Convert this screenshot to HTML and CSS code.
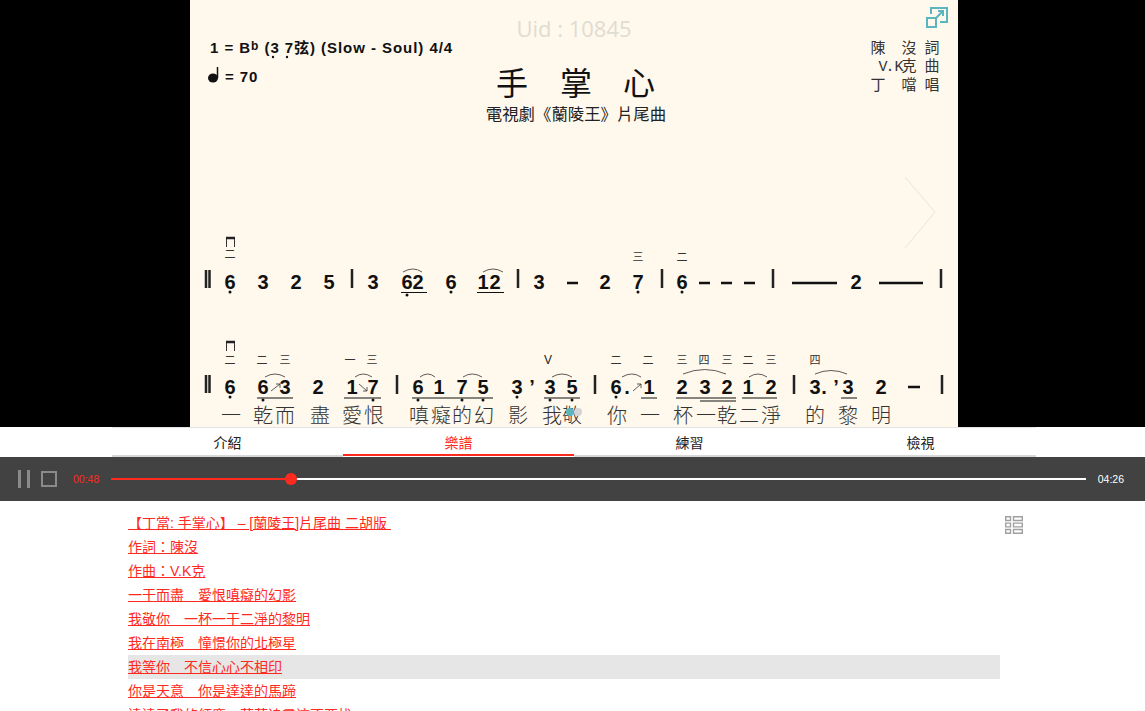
FILE: index.html
```html
<!DOCTYPE html>
<html lang="zh-Hant">
<head>
<meta charset="utf-8">
<title>手掌心</title>
<link rel="stylesheet" href="styles.css">
</head>
<body>
<section class="stage">
  <svg class="sheet" viewBox="190 0 768 427" width="768" height="427">
    <rect class="paper" x="190" y="0" width="768" height="427"/>
    <text class="uid" x="574" y="37">Uid : 10845</text>
    <g class="expand">
      <path d="M931 14V8H947V22H940"/>
      <path d="M927 18H936V27H927Z"/>
      <path d="M936 18L943 11M938 11H943V16"/>
    </g>
    <text class="key" x="210" y="53">1 = B<tspan class="sup" dy="-3">b</tspan><tspan dy="3"> (</tspan><tspan class="keyn">3 7</tspan>弦) (Slow - Soul) 4/4</text>
    <g class="ink">
      <circle cx="273" cy="57" r="1.200"/><circle cx="287" cy="57" r="1.200"/>
    </g>
    <ellipse class="ink" cx="213" cy="78" rx="5" ry="4.5"/>
    <path class="stem" d="M217.500 78V67"/>
    <text class="key" x="225" y="82">= 70</text>
    <text class="title" x="512 576 639" y="95">手掌心</text>
    <text class="subtitle" x="576" y="120">電視劇《蘭陵王》片尾曲</text>
    <text class="credit" x="878 909 932" y="53">陳沒詞</text>
    <text class="credit" x="883 890 899 909 932" y="71">V.K克曲</text>
    <text class="credit" x="878 909 932" y="90">丁噹唱</text>
    <path class="chevron" d="M905 177L935 212L905 248"/>

    <g class="bars">
      <path d="M206 270V288M209.500 270V288M352 269V288M518 269V288M662 269V288M773 269V288M941 269V288"/>
      <path d="M206 375V393M209.500 375V393M397 375V394M595 375V394M794 375V394M942 375V394"/>
    </g>
    <path class="bow" d="M226.500 247V238H234.500V247"/>
    <path class="bowtop" d="M226 238H235"/>
    <path class="bow" d="M226.500 351V342H234.500V351"/>
    <path class="bowtop" d="M226 342H235"/>

    <text class="finger" x="230" y="258">二</text>
    <text class="finger" x="638 682" y="261">三二</text>
    <text class="finger" x="230 262 285 350 372 616 648 682 704 727 748 771 815" y="364">二二三一三二二三四三二三四</text>
    <text class="bowmark" x="548" y="364">V</text>

    <text class="note" x="230 263 296 329 373 407 418 451 483 495 539 605 638 682" y="289">63253626123276</text>
    <text class="note" x="230 263 285 318 352 373 418 439 462 483 517 550 572 616 649 682 705 727 748 771 815 848 881" y="394">66321761753356123212332</text>
    <text class="note" x="627 824" y="394">..</text>
    <text class="note" x="532 836" y="394">’’</text>
    <text class="note" x="856" y="289">2</text>
    <g class="dash">
      <path d="M567 283H578M699 283H710M721 283H732M744 283H755M792 283H837M879 283H923M908 387H920"/>
    </g>
    <g class="under">
      <path d="M401 292.500H427M477 292.500H504"/>
      <path d="M257 398H293M344 398H381M412 398H493M544 398H580M641 398H657M676 398H736M742 398H777M841 398H857"/>
      <path d="M700 401H736"/>
    </g>
    <g class="ink">
      <circle cx="230" cy="292" r="1.500"/><circle cx="407" cy="295" r="1.500"/><circle cx="451" cy="292" r="1.500"/>
      <circle cx="638" cy="292" r="1.500"/><circle cx="682" cy="292" r="1.500"/>
      <circle cx="230" cy="397" r="1.500"/><circle cx="263" cy="400" r="1.500"/><circle cx="373" cy="400" r="1.500"/>
      <circle cx="418" cy="400" r="1.500"/><circle cx="462" cy="400" r="1.500"/><circle cx="483" cy="400" r="1.500"/>
      <circle cx="517" cy="397" r="1.500"/><circle cx="550" cy="400" r="1.500"/><circle cx="572" cy="400" r="1.500"/>
      <circle cx="616" cy="397" r="1.500"/>
    </g>
    <g class="tie">
      <path d="M403 272Q413 266 422 272M483 272Q493 266 503 272"/>
      <path d="M265 377Q275 371 285 377M355 377Q363 371 372 377M420 377Q428 371 435 377M463 377Q472 371 482 377M552 377Q562 371 572 377M622 377Q632 371 641 377M683 374Q705 365 726 374M749 377Q758 371 767 377M815 374Q831 367 847 374"/>
      <path d="M271 391L280 384M276 384H280V388M359 384L367 391M363 391H367V387M633 391L641 384M637 384H641V388"/>
    </g>

    <text class="lyric" x="231 263 285 320 352 374 419 441 462 484 518 552 572 617 650 683 706 727 749 771 815 848 881" y="423">一乾而盡愛恨嗔癡的幻影我敬你一杯一乾二淨的黎明</text>
    <circle class="dot-off" cx="578" cy="412" r="4"/>
    <circle class="dot-on" cx="570" cy="412" r="4"/>
  </svg>
</section>

<nav class="tabs">
  <div class="tab">介紹</div>
  <div class="tab active">樂譜</div>
  <div class="tab">練習</div>
  <div class="tab">檢視</div>
</nav>

<section class="player">
  <div class="pause"><span></span><span></span></div>
  <div class="stop"></div>
  <span class="time elapsed">00:48</span>
  <div class="track">
    <div class="played" style="width:18.46%"><span class="knob"></span></div>
  </div>
  <span class="time total">04:26</span>
</section>

<main class="content">
  <svg class="view-icon" viewBox="0 0 18 18" width="18" height="18">
    <path d="M.7 .7H5.500V4.500H.7ZM8.500 .7H17.300V4.500H8.500ZM.7 7.100H5.500V10.900H.7ZM8.500 7.100H17.300V10.900H8.500ZM.7 13.500H5.500V17.300H.7ZM8.500 13.500H17.300V17.300H8.500Z"/>
  </svg>
  <ul class="list">
    <li><a href="#">【丁當: 手掌心】 – [蘭陵王]片尾曲 二胡版&nbsp;</a></li>
    <li><a href="#">作詞：陳沒</a></li>
    <li><a href="#">作曲：V.K克</a></li>
    <li><a href="#">一干而盡　愛恨嗔癡的幻影</a></li>
    <li><a href="#">我敬你　一杯一干二淨的黎明</a></li>
    <li><a href="#">我在南極　憧憬你的北極星</a></li>
    <li class="current"><a href="#">我等你　不信心心不相印</a></li>
    <li><a href="#">你是天意　你是達達的馬蹄</a></li>
    <li><a href="#">達達了我的紅塵　茫茫追尋這不要找</a></li>
  </ul>
</main>
</body>
</html>
```
FILE: styles.css
```css
* { box-sizing: border-box; }
html, body { margin: 0; padding: 0; height: 711px; overflow: hidden; background: #fff; }
body { font-family: "Liberation Sans", "Noto Sans CJK TC", sans-serif; color: #222; }

.stage { height: 427px; background: #000; padding-left: 190px; }
.sheet { display: block; width: 768px; height: 427px; }
.paper { fill: #fff8ec; }
.sheet text { text-anchor: middle; }
.uid { font-family: "Open Sans", sans-serif; font-size: 22px; fill: #dfdcd2; }
.expand path { fill: none; stroke: #5ab5bf; stroke-width: 2; }
.sheet .key { text-anchor: start; font-family: "Liberation Sans", "Noto Sans CJK TC", sans-serif; font-weight: 700; font-size: 15px; letter-spacing: .95px; fill: #111; }
.sup { font-size: 12px; }
.title { font-family: "Noto Sans CJK TC", sans-serif; font-size: 32px; fill: #111; font-weight: 400; }
.subtitle { font-family: "Noto Sans CJK TC", sans-serif; font-size: 16.4px; fill: #222; }
.credit { font-family: "Liberation Mono", "Noto Sans CJK TC", monospace; font-size: 15px; fill: #333; }
.chevron { fill: none; stroke: #eae5da; stroke-width: 1; }
.ink { fill: #111; }
.stem { stroke: #111; stroke-width: 1.5; fill: none; }
.bars path { stroke: #222; stroke-width: 2.5; fill: none; }
.bow { stroke: #333; stroke-width: 1; fill: none; }
.bowtop { stroke: #222; stroke-width: 2.5; fill: none; }
.finger { font-family: "Noto Sans CJK TC", sans-serif; font-size: 11px; fill: #333; }
.bowmark { font-family: "Liberation Sans", sans-serif; font-size: 12px; fill: #222; }
.note { font-family: "Liberation Sans", sans-serif; font-weight: 700; font-size: 20px; fill: #111; }
.dash path { stroke: #111; stroke-width: 2.5; fill: none; }
.under path { stroke: #111; stroke-width: 1.2; fill: none; }
.tie path { stroke: #333; stroke-width: .8; fill: none; }
.lyric { font-family: "Noto Sans CJK TC", sans-serif; font-size: 20px; font-weight: 300; fill: #333; }
.dot-off { fill: #d4d4d4; }
.dot-on { fill: #5ab5bf; }

.tabs { width: 924px; height: 30px; margin-left: 112px; display: grid; grid-template-columns: repeat(4, 1fr); align-items: start; border-top: 1px solid #e3e3e3; }
.tab { font-size: 14px; line-height: 31px; height: 29px; text-align: center; color: #222; border-bottom: 2px solid #d8d8d8; }
.tab.active { height: 28px; color: #ff2a1f; border-bottom-color: #ff2a1f; }

.player { height: 44px; background: #424242; display: flex; align-items: center; padding: 0 21px 0 18px; }
.pause { display: flex; gap: 6px; width: 23px; flex: none; }
.pause span { width: 3px; height: 18px; background: #8a8a8a; }
.stop { width: 16px; height: 16px; border: 2px solid #8a8a8a; flex: none; }
.time { font-family: "Liberation Sans", sans-serif; font-size: 10.5px; flex: none; }
.elapsed { color: #ff2a1f; margin-left: 16px; width: 38px; }
.total { color: #fff; margin-left: 12px; }
.track { flex: 1; height: 2px; background: #fff; }
.played { height: 2px; background: #ff2a1f; position: relative; }
.knob { position: absolute; right: -6px; top: -5px; width: 12px; height: 12px; border-radius: 50%; background: #ff2a1f; }

.content { position: relative; padding: 10px 145px 0 128px; }
.view-icon { position: absolute; left: 1005px; top: 15px; fill: none; stroke: #a0a0a0; stroke-width: 1.4; }
.list { list-style: none; margin: 0; padding: 0; }
.list li { height: 24px; line-height: 24px; font-size: 14px; white-space: nowrap; }
.list a { color: #ff2a1f; text-decoration: underline; }
.list .current { background: #e6e6e6; }
```
